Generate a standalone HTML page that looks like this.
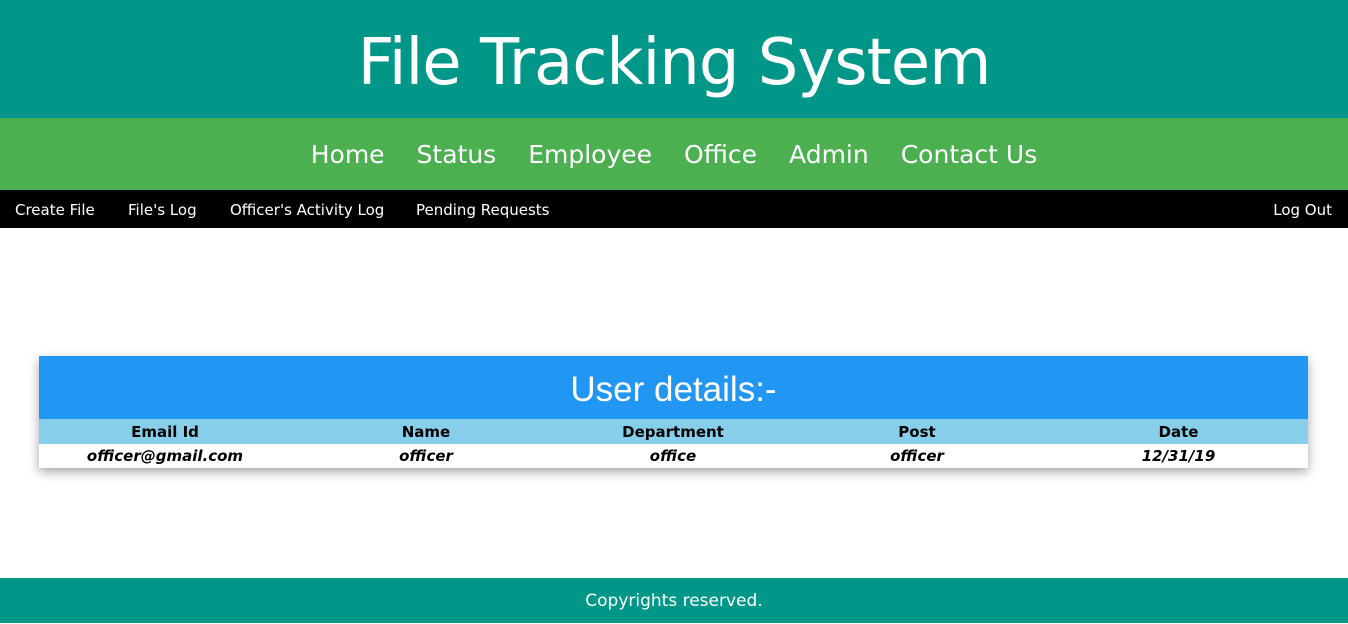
<!DOCTYPE html>
<html><head><meta charset="utf-8"><style>
*{margin:0;padding:0;box-sizing:border-box}
body{width:1348px;height:623px;background:#fff;font-family:"DejaVu Sans","Liberation Sans",sans-serif;position:relative;overflow:hidden}
.top{height:118px;background:#009688;color:#fff;text-align:center;font-size:64px;line-height:126px;font-family:"DejaVu Sans",sans-serif;letter-spacing:-1px}
.nav{height:72px;background:#4caf50;text-align:center;line-height:74px;color:#fff;font-size:25px}
.nav span{margin:0 16px}
.sub{height:38px;background:#000;color:#fff;font-size:15px;line-height:40px;position:relative}
.sub span{position:absolute;top:0}
.box{position:absolute;left:39px;top:356px;width:1269px;box-shadow:0 4px 10px rgba(0,0,0,.35)}
.h{height:63px;background:#2196f3;color:#fff;text-align:center;font-size:35px;line-height:68px;font-family:"Liberation Sans",sans-serif}
table{width:100%;border-collapse:collapse;font-size:15px}
th{background:#87ceeb;height:25px;font-weight:bold}
td{height:24px;text-align:center;font-style:italic;font-weight:bold}
.foot{position:absolute;left:0;top:578px;width:1348px;height:45px;background:#009688;color:#fff;text-align:center;line-height:46px;font-size:17px}
</style></head><body>
<div class="top">File Tracking System</div>
<div class="nav"><span>Home</span><span>Status</span><span>Employee</span><span>Office</span><span>Admin</span><span>Contact Us</span></div>
<div class="sub"><span style="left:15px">Create File</span><span style="left:128px">File's Log</span><span style="left:230px">Officer's Activity Log</span><span style="left:416px">Pending Requests</span><span style="right:16px">Log Out</span></div>
<div class="box"><div class="h">User details:-</div>
<table><tr><th style="width:252px">Email Id</th><th style="width:270px">Name</th><th style="width:224px">Department</th><th style="width:264px">Post</th><th>Date</th></tr>
<tr><td>officer@gmail.com</td><td>officer</td><td>office</td><td>officer</td><td>12/31/19</td></tr></table></div>
<div class="foot">Copyrights reserved.</div>
</body></html>
